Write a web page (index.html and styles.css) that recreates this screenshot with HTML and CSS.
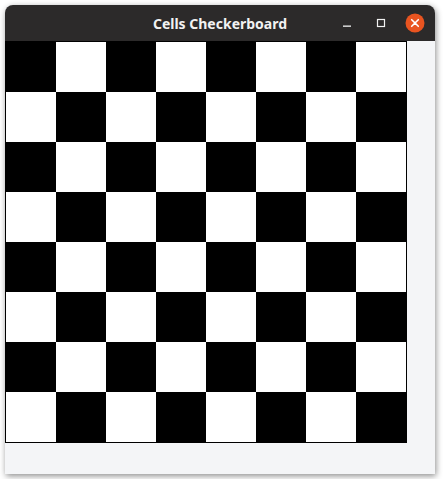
FILE: index.html
```html
<!DOCTYPE html>
<html>
<head>
<meta charset="utf-8">
<link rel="stylesheet" href="styles.css">
</head>
<body>
<div class="window">
  <div class="titlebar">
    <div class="spacer"></div>
    <div class="title">Cells Checkerboard</div>
    <div class="controls">
      <span class="btn"><svg width="20" height="20" viewBox="0 0 20 20"><rect x="6" y="12.5" width="8" height="1.3" fill="#f2f2f2"/></svg></span>
      <span class="btn"><svg width="20" height="20" viewBox="0 0 20 20"><rect x="6.5" y="6.5" width="7" height="7" fill="none" stroke="#f2f2f2" stroke-width="1.2"/></svg></span>
      <span class="btn close"><svg width="20" height="20" viewBox="0 0 20 20"><circle cx="10" cy="10" r="9.5" fill="#e95420"/><path d="M6.7 6.7 L13.3 13.3 M13.3 6.7 L6.7 13.3" stroke="#fff" stroke-width="1.6" stroke-linecap="round"/></svg></span>
    </div>
  </div>
  <div class="content">
    <div class="board">
      <div class="b"></div><div class="w"></div><div class="b"></div><div class="w"></div><div class="b"></div><div class="w"></div><div class="b"></div><div class="w"></div>
      <div class="w"></div><div class="b"></div><div class="w"></div><div class="b"></div><div class="w"></div><div class="b"></div><div class="w"></div><div class="b"></div>
      <div class="b"></div><div class="w"></div><div class="b"></div><div class="w"></div><div class="b"></div><div class="w"></div><div class="b"></div><div class="w"></div>
      <div class="w"></div><div class="b"></div><div class="w"></div><div class="b"></div><div class="w"></div><div class="b"></div><div class="w"></div><div class="b"></div>
      <div class="b"></div><div class="w"></div><div class="b"></div><div class="w"></div><div class="b"></div><div class="w"></div><div class="b"></div><div class="w"></div>
      <div class="w"></div><div class="b"></div><div class="w"></div><div class="b"></div><div class="w"></div><div class="b"></div><div class="w"></div><div class="b"></div>
      <div class="b"></div><div class="w"></div><div class="b"></div><div class="w"></div><div class="b"></div><div class="w"></div><div class="b"></div><div class="w"></div>
      <div class="w"></div><div class="b"></div><div class="w"></div><div class="b"></div><div class="w"></div><div class="b"></div><div class="w"></div><div class="b"></div>
    </div>
  </div>
</div>
</body>
</html>
```

FILE: styles.css
```css
html, body {
  margin: 0;
  padding: 0;
  background: #ffffff;
}
.window {
  margin: 5px;
  width: 430px;
  height: 469px;
  border-radius: 8px 8px 0 0;
  background: #f4f5f7;
  box-shadow: 1px 2px 6px rgba(0,0,0,0.45);
  overflow: hidden;
  display: flex;
  flex-direction: column;
}
.titlebar {
  height: 36px;
  background: #2c2a2a;
  display: grid;
  grid-template-columns: 1fr auto 1fr;
  align-items: center;
  flex: none;
}
.title {
  font-family: "Noto Sans", sans-serif;
  font-weight: bold;
  font-size: 14px;
  color: #f2f2f2;
  padding-top: 1px;
}
.controls {
  display: flex;
  justify-content: flex-end;
  gap: 14px;
  padding-right: 10px;
}
.btn {
  width: 20px;
  height: 20px;
  display: block;
}
.btn svg { display: block; }
.content {
  flex: 1;
}
.board {
  display: grid;
  grid-template-columns: repeat(8, 50px);
  grid-auto-rows: 50px;
  border: 1px solid #000;
  width: 400px;
}
.b { background: #000; }
.w { background: #fff; }
```
